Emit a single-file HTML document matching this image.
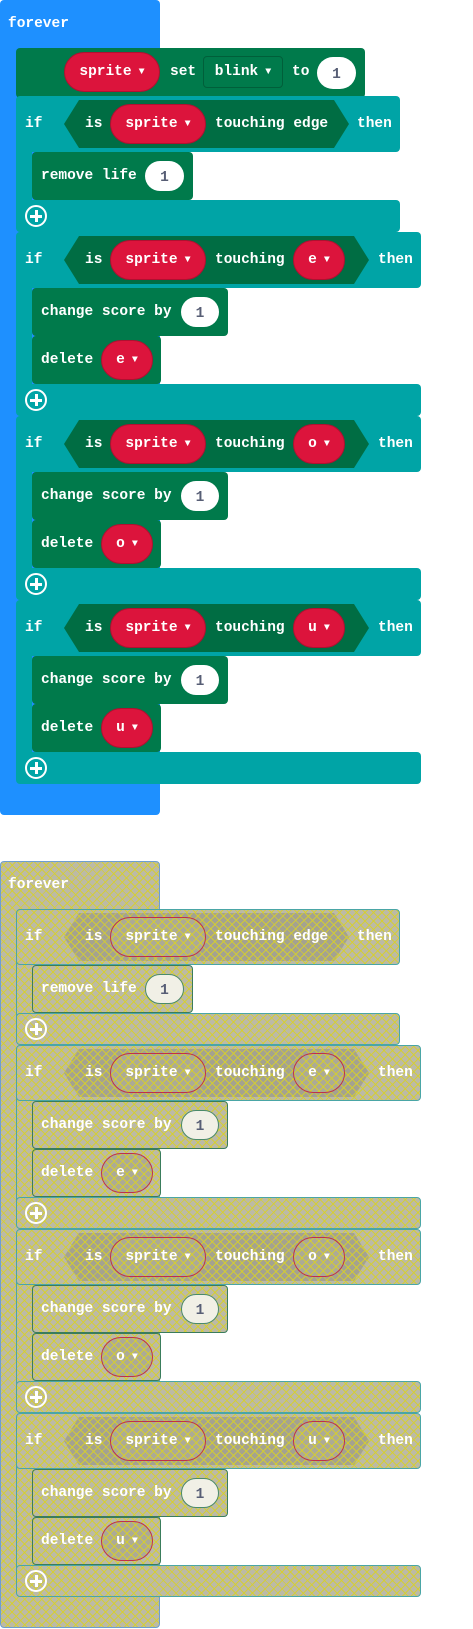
<!DOCTYPE html>
<html><head><meta charset="utf-8"><style>
body{margin:0;width:473px;height:1629px;background:#fff;position:relative;overflow:hidden;font-family:"Liberation Mono",monospace;font-weight:bold;font-size:14.5px;color:#fff}
.r{position:absolute;box-sizing:border-box;border-radius:4px}
.c{display:flex;align-items:center;justify-content:center;white-space:pre}
.t{position:absolute;white-space:pre;line-height:20px;height:20px}
.blue{background:#1e90ff}.teal{background:#00a4a6}.green{background:#007a4b}
.red{background:#dc143c;border:1px solid #b01030;border-radius:20px}
.oval{background:#fff;border-radius:16px;color:#575e75;padding-top:3px}
.dd{background:#007a4b;border:1px solid #005f3a;border-radius:4px}
.hex{position:absolute;background:#006d43;clip-path:polygon(0 50%,15px 0,calc(100% - 15px) 0,100% 50%,calc(100% - 15px) 100%,15px 100%)}
.g .r,.g .hex{background-color:#bcbaa6;background-image:repeating-linear-gradient(45deg,rgba(215,208,40,.85) 0 1px,transparent 1px 6px),repeating-linear-gradient(-45deg,rgba(215,208,40,.85) 0 1px,transparent 1px 6px)}
.g .blue{border:1.5px solid #6d9ed0}.g .teal{border:1.5px solid #4aa6a6}.g .green{border:1.5px solid #3a7d5c}
.g .arm{border-width:0 0 0 1.5px!important}
.g .hex{background-color:#a4a290}
.g .red{border:1.5px solid #c0304a;background-color:#aca a96}
.g .red{background-color:#acaa96}
.g .oval{background:#f1f0e6;border:1.5px solid #4a8a6a;background-image:none}
.plus{position:absolute;width:18px;height:18px;border:2.5px solid #fff;border-radius:50%}
.plus:before{content:"";position:absolute;left:3px;top:7.5px;width:12px;height:3px;background:#fff}
.plus:after{content:"";position:absolute;left:7.5px;top:3px;width:3px;height:12px;background:#fff}
.arr{font-size:10px;margin-left:7px}
</style></head><body>
<div id="a"></div><div id="b" class="g"></div>
<script>
function build(el,o,ghost){
 let h='';
 const R=(x,y,w,hh,c,extra='')=>h+=`<div class="r ${c}" style="left:${x}px;top:${o+y}px;width:${w}px;height:${hh}px;${extra}"></div>`;
 const T=(x,y,s)=>h+=`<div class="t" style="left:${x}px;top:${o+y-10}px">${s}</div>`;
 const P=(x,y,w,hh,s,c)=>{h+=`<div class="r c ${c}" style="left:${x}px;top:${o+y}px;width:${w}px;height:${hh}px">${s}</div>`};
 const A=s=>s+'<span class="arr">▼</span>';
 let end = ghost?767:815;
 R(0,0,160,end,'blue');
 let y=48;
 if(!ghost){
  R(16,48,349,50,'green');
  P(64,52,96,40,A('sprite'),'red');
  T(170,72,'set');
  P(203,56,80,32,A('blink'),'dd');
  T(292,72,'to');
  P(317,57,39,32,'1','oval');
  y=96;
 }
 const rows=[['edge',400,349],['e',421,369],['o',421,369],['u',421,369]];
 rows.forEach((rw)=>{
  const [k,W,HX]=rw;
  const inner = k==='edge'?48:96;
  R(16,y+50,16,inner+12,'teal arm','border-radius:0');
  R(16,y,W-16,56,'teal');
  h+=`<div class="hex" style="left:64px;top:${o+y+4}px;width:${HX-64}px;height:48px"></div>`;
  T(25,y+28,'if');T(85,y+28,'is');
  P(110,y+8,96,40,A('sprite'),'red');
  if(k==='edge'){T(215,y+28,'touching edge');T(357,y+28,'then');}
  else{T(215,y+28,'touching');P(293,y+8,52,40,A(k),'red');T(378,y+28,'then');}
  let yy=y+56;
  if(k==='edge'){
   R(32,yy,161,48,'green');T(41,yy+24,'remove life');P(145,yy+9,39,30,'1','oval');yy+=48;
  }else{
   R(32,yy,196,48,'green');T(41,yy+24,'change score by');P(181,yy+9,38,30,'1','oval');yy+=48;
   R(32,yy,129,48,'green');T(41,yy+24,'delete');P(101,yy+4,52,40,A(k),'red');yy+=48;
  }
  R(16,yy,W-16,32,'teal');
  h+=`<div class="plus" style="left:25px;top:${o+yy+5}px"></div>`;
  y=yy+32;
 });
 T(8,24,'forever');
 el.innerHTML=h;
}
build(document.getElementById('a'),0,false);
build(document.getElementById('b'),861,true);
</script>
</body></html>
